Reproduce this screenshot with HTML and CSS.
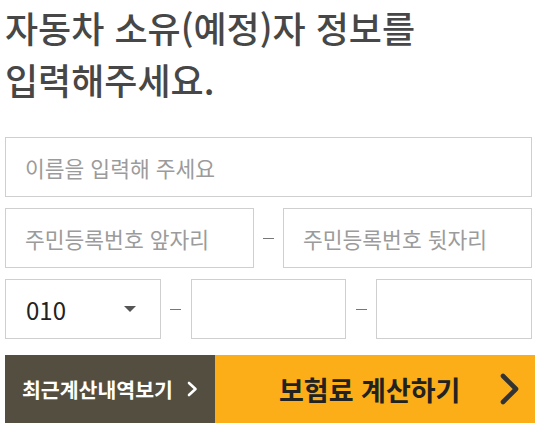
FILE: index.html
```html
<!DOCTYPE html>
<html lang="ko">
<head>
  <meta charset="UTF-8" />
  <meta name="viewport" content="width=device-width, initial-scale=1.0"/>
  <title>자동차 소유자 정보 입력</title>
  <link rel="stylesheet" href="styles.css">
</head>

<body>
  <div class="page">
    <h1 class="title">자동차 소유(예정)자 정보를<br>입력해주세요.</h1>

    <form class="form">
      <div class="row">
        <input class="field" type="text" placeholder="이름을 입력해 주세요">
      </div>
      <div class="row row-id">
        <input class="field" type="text" placeholder="주민등록번호 앞자리">
        <span class="dash"></span>
        <input class="field" type="password" placeholder="주민등록번호 뒷자리">
      </div>
      <div class="row row-phone">
        <div class="select">
          <span>010</span>
          <span class="caret"></span>
        </div>
        <span class="dash"></span>
        <input class="field" type="tel">
        <span class="dash"></span>
        <input class="field" type="tel">
      </div>
    </form>
  </div>

  <div class="actions">
    <button class="btn btn-history">
      최근계산내역보기
      <svg width="11" height="16" viewBox="0 0 11 16"><path d="M2 2 L8.5 8 L2 14" fill="none" stroke="#fff" stroke-width="2.6" stroke-linecap="round" stroke-linejoin="round"/></svg>
    </button>
    <button class="btn btn-calc">
      <span>보험료 계산하기</span>
      <svg width="22" height="34" viewBox="0 0 22 34"><path d="M4 4 L17 17 L4 30" fill="none" stroke="#333" stroke-width="4.6" stroke-linecap="round" stroke-linejoin="round"/></svg>
    </button>
  </div>
</body>
</html>
```

FILE: styles.css
```css
html, body {
  margin: 0;
  background: white;
  overflow: hidden;
  font-family: "Noto Sans CJK KR", "Noto Sans", sans-serif;
}

/* heading */
.page {
  padding: 0 8px 0 5px;
}

.title {
  margin: 0;
  padding-top: 1px;
  font-size: 36px;
  line-height: 52px;
  font-weight: 500;
  color: #474747;
}

/* form rows */
.form {
  margin-top: 32px;
  display: flex;
  flex-direction: column;
  gap: 11px;
}

.row {
  display: grid;
  grid-template-columns: 1fr;
  height: 60px;
}

.row-id {
  grid-template-columns: 1fr 29px 1fr;
}

.row-phone {
  grid-template-columns: 1fr 30px 1fr 30px 1fr;
}

.field,
.select {
  box-sizing: border-box;
  width: 100%;
  height: 60px;
  margin: 0;
  border: 1px solid #cfcfcf;
  background: white;
  padding: 0 19px;
  font-family: inherit;
  font-size: 21.5px;
  color: #222;
  outline: none;
}

.field::placeholder {
  color: #9b9b9b;
}

.dash {
  align-self: center;
  justify-self: center;
  width: 11px;
  height: 1px;
  background: #777;
}

.select {
  display: flex;
  align-items: center;
  justify-content: space-between;
  padding: 0 24px 0 20px;
  font-size: 24px;
  color: #222;
}

.caret {
  width: 0;
  height: 0;
  border-left: 6px solid transparent;
  border-right: 6px solid transparent;
  border-top: 6px solid #555;
}

/* bottom buttons */
.actions {
  display: flex;
  margin: 16px 5px 0 5px;
  height: 68px;
}

.btn {
  border: none;
  margin: 0;
  display: flex;
  align-items: center;
  font-family: inherit;
  font-weight: 700;
  cursor: pointer;
}

.btn-history {
  width: 210px;
  background: #544e41;
  color: white;
  font-size: 20.5px;
  padding: 0 0 0 17px;
  gap: 14px;
}

.btn-calc {
  flex: 1;
  background: #fbae17;
  color: #222;
  font-size: 27px;
  padding: 0 14px 0 64px;
  justify-content: space-between;
}
```
